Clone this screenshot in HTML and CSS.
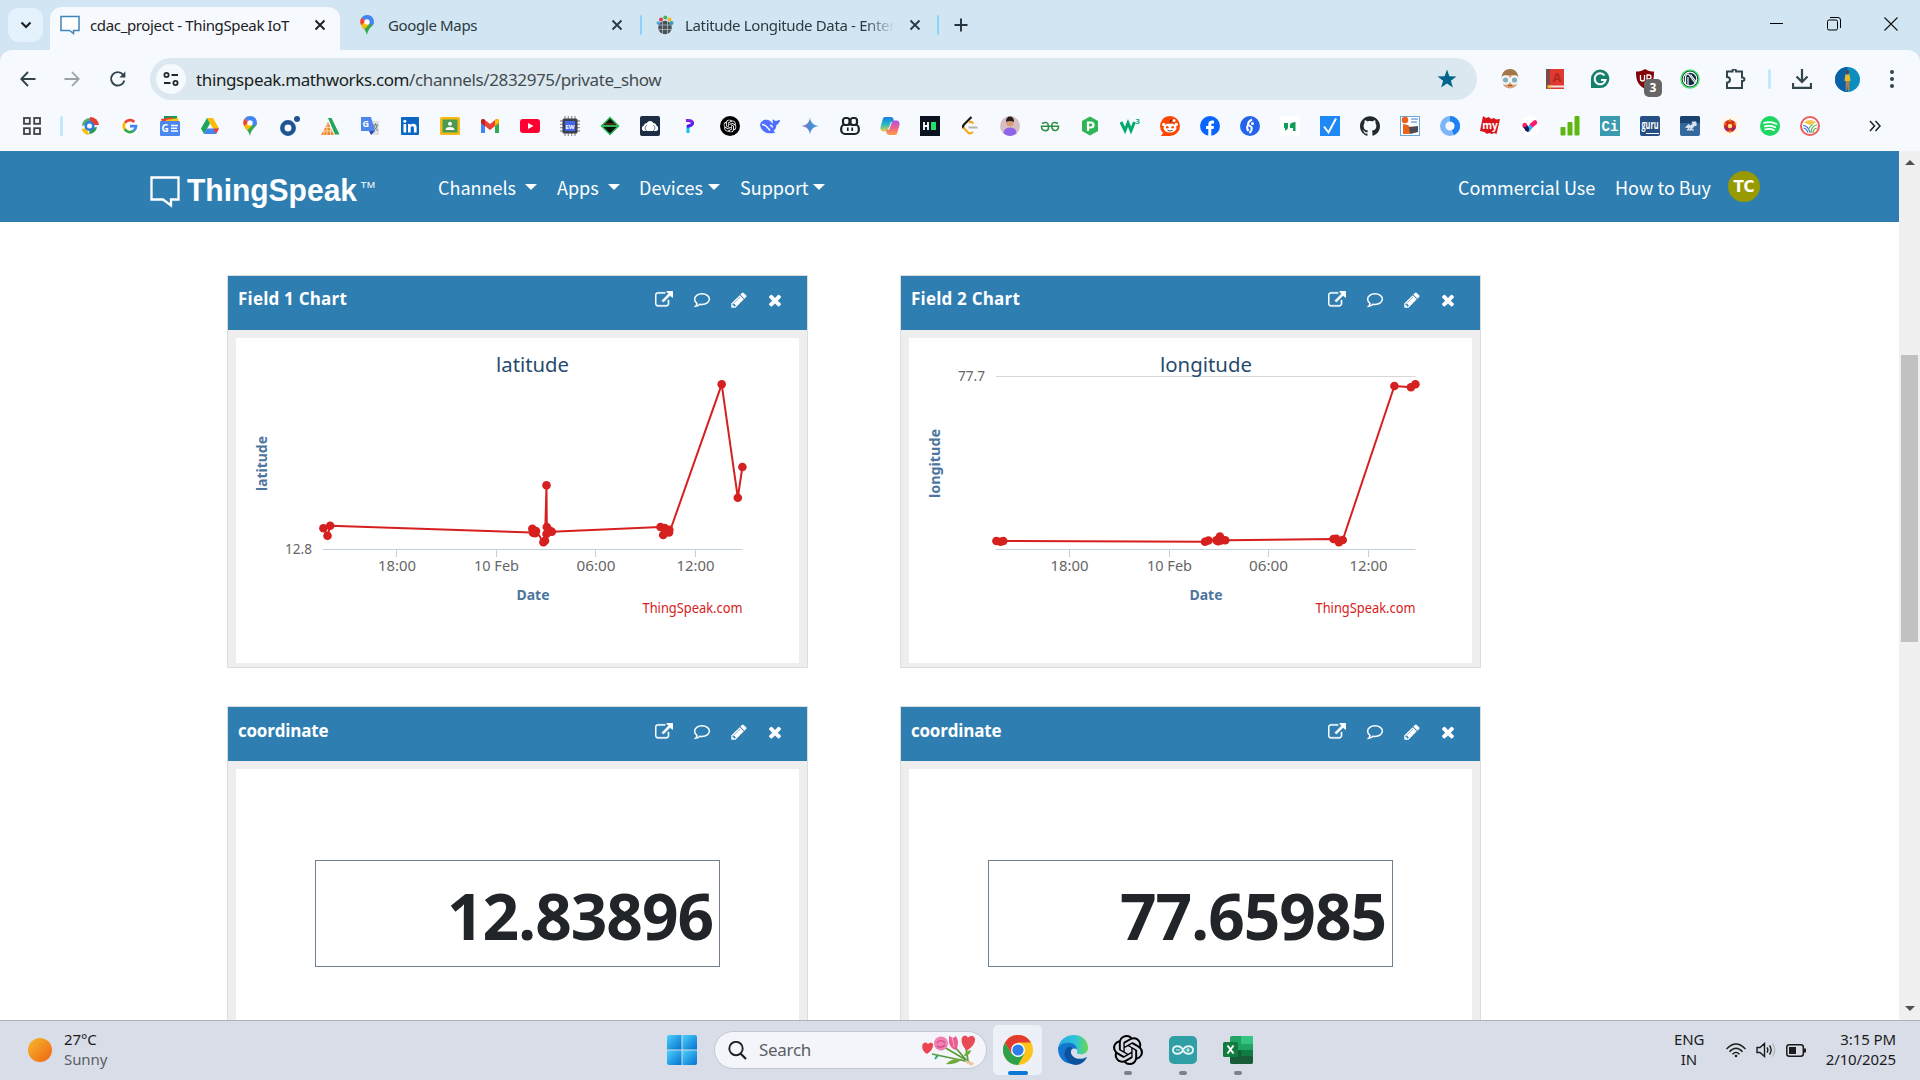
FILE: index.html
```
<!DOCTYPE html>
<html lang="en">
<head>
<meta charset="utf-8">
<title>cdac_project - ThingSpeak IoT</title>
<link rel="stylesheet" href="styles.css">
</head>
<body>
<svg class="defs" width="0" height="0">
  <defs>
    <linearGradient id="sun" x1="0" y1="0" x2="1" y2="1"><stop offset="0" stop-color="#f6b92e"/><stop offset="1" stop-color="#ef6410"/></linearGradient>
    <linearGradient id="win" x1="0" y1="0" x2="1" y2="1"><stop offset="0" stop-color="#4cd0fb"/><stop offset="1" stop-color="#0572d0"/></linearGradient>
    <linearGradient id="gem" x1="0" y1="0" x2="1" y2="0"><stop offset="0" stop-color="#9a72c4"/><stop offset=".6" stop-color="#3f8fd6"/><stop offset="1" stop-color="#4ba0e8"/></linearGradient>
    <linearGradient id="copA" x1="0" y1="0" x2="0" y2="1"><stop offset="0" stop-color="#1c7de0"/><stop offset=".5" stop-color="#22b9c8"/><stop offset="1" stop-color="#f2d040"/></linearGradient>
    <linearGradient id="copB" x1="0" y1="0" x2="0" y2="1"><stop offset="0" stop-color="#a852e8"/><stop offset=".5" stop-color="#f0608c"/><stop offset="1" stop-color="#ffa040"/></linearGradient>
    <linearGradient id="edge" x1="0" y1="0" x2="1" y2="0"><stop offset="0" stop-color="#2aa5e0"/><stop offset=".6" stop-color="#2fc5d8"/><stop offset="1" stop-color="#6ad94a"/></linearGradient>
    <linearGradient id="pp" x1="0" y1="0" x2="0" y2="1"><stop offset="0" stop-color="#8a20e0"/><stop offset="1" stop-color="#5a10f0"/></linearGradient>
    <symbol id="pin" viewBox="0 0 20 20"><path fill="#34a853" d="M10 20c.6-3 1.500-5 3.500-7.400C15.500 10.300 17 9 17 6.900L10 9.500 5.500 12.200C8 15 9.300 17 10 20z"/><path fill="#fbbc04" d="M4.200 10.200l4-5 4 4-5 5.200C5.700 12.700 4.800 11.500 4.200 10.200z"/><path fill="#ea4335" d="M4.700 2.500L8.500 6 4.200 10.200C2.700 7.500 2.900 4.700 4.700 2.500z"/><path fill="#4285f4" d="M4.700 2.500C8-1.300 14.800-.7 16.500 4.300c.6 2 .5 3.600-.3 5.300L12 9.500 8.500 5.800z"/><circle cx="10" cy="6.900" r="2.700" fill="#fff"/></symbol>
    <symbol id="knot" viewBox="0 0 24 24"><path d="M22.2819 9.8211a5.9847 5.9847 0 0 0-.5157-4.9108 6.0462 6.0462 0 0 0-6.5098-2.9A6.0651 6.0651 0 0 0 4.9807 4.1818a5.9847 5.9847 0 0 0-3.9977 2.9 6.0462 6.0462 0 0 0 .7427 7.0966 5.98 5.98 0 0 0 .511 4.9107 6.051 6.051 0 0 0 6.5146 2.9001A5.9847 5.9847 0 0 0 13.2599 24a6.0557 6.0557 0 0 0 5.7718-4.2058 5.9894 5.9894 0 0 0 3.9977-2.9001 6.0557 6.0557 0 0 0-.7475-7.0729zm-9.022 12.6081a4.4755 4.4755 0 0 1-2.8764-1.0408l.1419-.0804 4.7783-2.7582a.7948.7948 0 0 0 .3927-.6813v-6.7369l2.02 1.1686a.071.071 0 0 1 .038.052v5.5826a4.504 4.504 0 0 1-4.4945 4.4944zm-9.6607-4.1254a4.4708 4.4708 0 0 1-.5346-3.0137l.142.0852 4.783 2.7582a.7712.7712 0 0 0 .7806 0l5.8428-3.3685v2.3324a.0804.0804 0 0 1-.0332.0615L9.74 19.9502a4.4992 4.4992 0 0 1-6.1408-1.6464zM2.3408 7.8956a4.485 4.485 0 0 1 2.3655-1.9728V11.6a.7664.7664 0 0 0 .3879.6765l5.8144 3.3543-2.0201 1.1685a.0757.0757 0 0 1-.071 0l-4.8303-2.7865A4.504 4.504 0 0 1 2.3408 7.872zm16.5963 3.8558L13.1038 8.364 15.1192 7.2a.0757.0757 0 0 1 .071 0l4.8303 2.7913a4.4944 4.4944 0 0 1-.6765 8.1042v-5.6772a.79.79 0 0 0-.407-.667zm2.0107-3.0231l-.142-.0852-4.7735-2.7818a.7759.7759 0 0 0-.7854 0L9.409 9.2297V6.8974a.0662.0662 0 0 1 .0284-.0615l4.8303-2.7866a4.4992 4.4992 0 0 1 6.6802 4.66zM8.3065 12.863l-2.02-1.1638a.0804.0804 0 0 1-.038-.0567V6.0742a4.4992 4.4992 0 0 1 7.3757-3.4537l-.142.0805L8.704 5.459a.7948.7948 0 0 0-.3927.6813zm1.0976-2.3654l2.602-1.4998 2.6069 1.4998v2.9994l-2.5974 1.4997-2.6067-1.4997Z"/></symbol>
    <symbol id="close" viewBox="0 0 12 12"><path d="M1.500 1.500l9 9M10.500 1.500l-9 9" fill="none" stroke="currentColor" stroke-width="1.900"/></symbol>
    <symbol id="ext" viewBox="0 0 1792 1792"><path d="M1408 928v320q0 119-84.500 203.500t-203.500 84.500h-832q-119 0-203.500-84.500t-84.500-203.500v-832q0-119 84.500-203.500t203.500-84.500h704q14 0 23 9t9 23v64q0 14-9 23t-23 9h-704q-66 0-113 47t-47 113v832q0 66 47 113t113 47h832q66 0 113-47t47-113v-320q0-14 9-23t23-9h64q14 0 23 9t9 23zm384-864v512q0 26-19 45t-45 19-45-19l-176-176-652 652q-10 10-23 10t-23-10l-114-114q-10-10-10-23t10-23l652-652-176-176q-19-19-19-45t19-45 45-19h512q26 0 45 19t19 45z" stroke="#fff" stroke-width="40"/></symbol>
    <symbol id="talk" viewBox="0 0 18 18"><path d="M9 2.800c4.200 0 7.400 2.300 7.400 5.300s-3.200 5.300-7.400 5.300c-.7 0-1.300 0-2-.2-1.100 1-2.500 1.800-4.300 2 .8-.8 1.200-1.700 1.300-2.800C2.400 11.300 1.600 9.800 1.600 8.100c0-3 3.200-5.300 7.400-5.300z" fill="none" stroke="currentColor" stroke-width="1.500"/></symbol>
    <symbol id="pencil" viewBox="0 0 1792 1792"><path d="M491 1536l91-91-235-235-91 91v107h128v128h107zm523-928q0-22-22-22-10 0-17 7l-542 542q-7 7-7 17 0 22 22 22 10 0 17-7l542-542q7-7 7-17zm-54-192l416 416-832 832h-416v-416zm683 96q0 53-37 90l-166 166-416-416 166-165q36-38 90-38 53 0 91 38l235 234q37 39 37 91z"/></symbol>
    <symbol id="times" viewBox="0 0 1792 1792"><path d="M1490 1322q0 40-28 68l-136 136q-28 28-68 28t-68-28l-294-294-294 294q-28 28-68 28t-68-28l-136-136q-28-28-28-68t28-68l294-294-294-294q-28-28-28-68t28-68l136-136q28-28 68-28t68 28l294 294 294-294q28-28 68-28t68 28l136 136q28 28 28 68t-28 68l-294 294 294 294q28 28 28 68z"/></symbol>
  </defs>
</svg>

<div class="tabs">
  <div class="tab-search"><svg width="12" height="8" viewBox="0 0 12 8"><path d="M1.500 1.500L6 6l4.500-4.500" fill="none" stroke="#1d2124" stroke-width="2.200"/></svg></div>
  <div class="tab active">
    <svg class="fav" width="20" height="20" viewBox="0 0 20 20"><path d="M1 1.500h18v14h-5.500v3l-4-3H1z" fill="#fff" stroke="#3f86b8" stroke-width="1.500"/></svg>
    <span class="title t1">cdac_project - ThingSpeak IoT</span>
    <svg class="x" width="12" height="12"><use href="#close"/></svg>
  </div>
  <div class="tab second">
    <svg class="fav" width="20" height="20"><use href="#pin"/></svg>
    <span class="title t2">Google Maps</span>
    <svg class="x" width="12" height="12"><use href="#close"/></svg>
  </div>
  <i class="tsep"></i>
  <div class="tab third">
    <svg class="fav" width="18" height="20" viewBox="0 0 18 20"><circle cx="9" cy="12.500" r="6.800" fill="#4a5258"/><path d="M2.500 10h13M2.500 14.500h13M6.500 6v13M11.500 6v13" stroke="#aeb9c2" stroke-width=".8"/><circle cx="5" cy="4.500" r="2" fill="#e03c4e"/><circle cx="9.300" cy="2.600" r="2" fill="#43b65a"/><circle cx="13.500" cy="4.500" r="2" fill="#f6b02c"/><circle cx="15.500" cy="8" r="2" fill="#26a3b5"/><circle cx="2.300" cy="8" r="1.800" fill="#4ba3d9"/></svg>
    <span class="title t3">Latitude Longitude Data - Enter</span>
    <svg class="x" width="12" height="12"><use href="#close"/></svg>
  </div>
  <i class="tsep"></i>
  <svg class="plus" width="14" height="14" viewBox="0 0 14 14"><path d="M7 .5v13M.5 7h13" stroke="#273239" stroke-width="1.900"/></svg>
  <div class="winctl">
    <svg width="14" height="14" viewBox="0 0 14 14"><path d="M0 6.500h13" stroke="#000"/></svg>
    <svg width="14" height="14" viewBox="0 0 14 14"><rect x=".5" y="3" width="10" height="10" rx="1.500" fill="none" stroke="#000"/><path d="M3 .5h8q2.500 0 2.500 2.500v8" fill="none" stroke="#000"/></svg>
    <svg width="14" height="14" viewBox="0 0 14 14"><path d="M.5.5l13 13M13.500.5l-13 13" stroke="#111" stroke-width="1.100"/></svg>
  </div>
</div>

<div class="chrome">
  <div class="toolbar">
    <svg class="back" width="16" height="16" viewBox="0 0 16 16"><path d="M15.500 8H1.500M8 1L1.300 8 8 15" fill="none" stroke="#33444d" stroke-width="1.900"/></svg>
    <svg class="fwd" width="16" height="16" viewBox="0 0 16 16"><path d="M.5 8h14M8 1l6.700 7L8 15" fill="none" stroke="#9aa2a8" stroke-width="1.800"/></svg>
    <svg class="reload" width="18" height="18" viewBox="0 0 18 18"><path d="M15.300 10.500A6.700 6.700 0 1 1 14 4.600" fill="none" stroke="#33444d" stroke-width="1.900"/><path d="M16.400 1.500v6h-6z" fill="#33444d"/></svg>
    <div class="omni">
      <span class="site"><svg width="16" height="16" viewBox="0 0 16 16" fill="none" stroke="#22292e" stroke-width="1.800"><circle cx="3.500" cy="4" r="2.100"/><path d="M8.500 4H15M1 12h6.500"/><circle cx="12.500" cy="12" r="2.100"/></svg></span>
      <span class="url"><b>thingspeak.mathworks.com</b>/channels/2832975/private_show</span>
      <svg class="star" width="20" height="20" viewBox="0 0 20 20"><path d="M10 .5l2.400 6.700 7.100.2-5.600 4.300 2 6.900L10 14.600l-5.900 4 2-6.900L.5 7.400l7.100-.2z" fill="#03658c"/></svg>
    </div>
    <div class="exts">
      <svg width="20" height="20" viewBox="0 0 20 20"><circle cx="10" cy="11" r="8.500" fill="#d99d74"/><path d="M1.500 9C2 3 5.500 0 10 0s8 3 8.500 9l-4-3-9 0z" fill="#a0764a"/><circle cx="5.500" cy="11" r="3.700" fill="#7fb0c0" stroke="#f3f6f7" stroke-width="2.200"/><circle cx="14.500" cy="11" r="3.700" fill="#7fb0c0" stroke="#f3f6f7" stroke-width="2.200"/><path d="M8 16.500h4" stroke="#a34a3b"/></svg>
      <svg width="20" height="20" viewBox="0 0 20 20"><rect x="1" width="18" height="20" fill="#e03a30"/><rect x="1" width="4" height="20" fill="#7d4a46"/><path d="M4 16.500h15v2H4z" fill="#f0e6e2"/><path d="M2.500 16h3v4l-1.500-1-1.500 1z" fill="#f0b428"/><text x="12" y="13" class="ic" font-size="13" text-anchor="middle" fill="#b0261f">A</text></svg>
      <svg width="20" height="20" viewBox="0 0 20 20"><path d="M1 19V10a9.200 9.200 0 1 1 9 9z" fill="#14806c"/><path d="M14.500 6.500a5.500 5.500 0 1 0 1 4.500h-4.500" fill="none" stroke="#fff" stroke-width="2"/></svg>
      <div class="shield"><svg width="20" height="20" viewBox="0 0 20 20"><path d="M10 0c3 2 5.500 2.500 9 2.500 0 8-1 13-9 17.500C2 15.500 1 10.500 1 2.500 4.500 2.500 7 2 10 0z" fill="#830409"/><path d="M5.500 6v4q0 2 2 2t2-2V6M12 13V6h2q2 0 2 2t-2 2h-2" fill="none" stroke="#fff" stroke-width="1.300"/></svg><em>3</em></div>
      <svg width="20" height="20" viewBox="0 0 20 20"><circle cx="10" cy="10" r="9" fill="#0f2f3f" stroke="#4be36a" stroke-width="1.500"/><circle cx="10" cy="10" r="6.800" fill="none" stroke="#fff" stroke-width="1.200"/><path d="M5.500 15V9q0-4 3-4l7 9.500M8 8v8M10.500 5.500l5.500 7" fill="none" stroke="#fff" stroke-width="1.200"/></svg>
      <svg width="22" height="20" viewBox="0 0 22 20"><path d="M2 2.500h5.500V2a1.800 1.800 0 0 1 3.600 0v.5H17v6h.7a1.700 1.700 0 0 1 0 3.400H17V19H2v-5.300c4-.2 4-5.500 0-5.700z" fill="none" stroke="#33444d" stroke-width="2"/></svg>
      <i class="bsep"></i>
      <svg class="dl" width="20" height="20" viewBox="0 0 20 20"><path d="M10 0v12.500M4.500 7.500l5.500 5.500 5.500-5.500M1 14v4.800h18V14" fill="none" stroke="#33444d" stroke-width="2.200"/></svg>
      <svg class="me" width="25" height="25" viewBox="0 0 25 25"><circle cx="12.500" cy="12.500" r="12.500" fill="#0c8fc0"/><path d="M0 12.500A12.500 12.500 0 0 1 12.500 0v25A12.500 12.500 0 0 1 0 12.500z" fill="#0a62a6"/><circle cx="12.500" cy="5" r="1.700" fill="#6a4126"/><path d="M10.300 7.500h4.400l.8 6.500h-6z" fill="#e6ba28"/><path d="M10.700 14h3.600v9.500h-1.300l-.5-6-.5 6h-1.300z" fill="#b98245"/></svg>
      <svg class="dots" width="4" height="18" viewBox="0 0 4 18" fill="#33444d"><circle cx="2" cy="2" r="2"/><circle cx="2" cy="9" r="2"/><circle cx="2" cy="16" r="2"/></svg>
    </div>
  </div>

  <div class="bookmarks">
    <svg class="grid" width="18" height="18" viewBox="0 0 18 18" fill="none" stroke="#3c4043" stroke-width="1.800"><rect x="1" y="1" width="5.800" height="5.800"/><rect x="11.200" y="1" width="5.800" height="5.800"/><rect x="1" y="11.200" width="5.800" height="5.800"/><rect x="11.200" y="11.200" width="5.800" height="5.800"/></svg>
    <i class="bsep"></i>
    <div class="bm">
      <svg viewBox="0 0 20 20"><path d="M10 1a9 9 0 0 1 9 8h-5l-4-4z" fill="#e8402f"/><path d="M17 11a8 8 0 0 1-8 7l1-6z" fill="#2d9d4e"/><path d="M9 19a9 9 0 0 1-7.500-6l5-1z" fill="#fbbf10"/><path d="M2 10a8 8 0 0 1 8-8v6z" fill="#55a878"/><circle cx="9.500" cy="10" r="5" fill="#2f7be0"/><circle cx="9.500" cy="10" r="2.500" fill="#fff"/></svg>
      <svg viewBox="0 0 20 20"><circle cx="10" cy="10" r="10" fill="#fff"/><g fill="none" stroke-width="2.800"><path d="M5 6.800A6 6 0 0 1 14.300 6" stroke="#ea4335"/><path d="M5 6.500a6 6 0 0 0 0 7.200" stroke="#fbbc05"/><path d="M4.800 13.300a6 6 0 0 0 9 1.300" stroke="#34a853"/><path d="M10 10.200h6a6 6 0 0 1-2.200 4.500" stroke="#4285f4"/></g></svg>
      <svg viewBox="0 0 20 20"><path d="M4 0h13v6H4z" fill="#0d9d58"/><path d="M1 3l12-2 1 5H2z" fill="#ea4335"/><path d="M6 4l12-2 1 4H6z" fill="#ffc20e"/><rect y="5" width="20" height="15" rx="1" fill="#4a87f0"/><text x="1.500" y="16" class="ic" font-size="10" fill="#fff">G</text><path d="M11 9.500h7M11 12.300h6M11 15h7" stroke="#fff" stroke-width="1.500"/></svg>
      <svg viewBox="0 0 20 20"><path d="M7 2h6l6 10.500h-6z" fill="#fbbc04"/><path d="M7 2L1 12.500 4 18l6-10.500z" fill="#1ea45c"/><path d="M4 18l3-5.500h12L16 18z" fill="#4285f4"/><path d="M13 12.500h6L16 18z" fill="#ea4335"/></svg>
      <svg><use href="#pin"/></svg>
      <svg viewBox="0 0 20 20"><circle cx="8" cy="12" r="5.700" fill="none" stroke="#205493" stroke-width="4.500"/><circle cx="17" cy="3" r="3" fill="#205493"/></svg>
      <svg viewBox="0 0 20 20"><path d="M8 2h3.500l8 16.500h-4.500z" fill="#22a45a"/><path d="M8 6L1 19h13z" fill="#f08a2c"/><path d="M5 11.500h6M3 15h9M7 8v11M10.500 11v8M4 13v6" stroke="#fff" stroke-width=".6"/></svg>
      <svg viewBox="0 0 20 20"><path d="M8 5h11v14h-7z" fill="#dfe1e3"/><path d="M1 1h10l4 14H1z" fill="#4d86ec"/><path d="M9 15h6l-4 4z" fill="#2c46b8"/><text x="2.500" y="11" class="ic" font-size="9" fill="#fff">G</text><path d="M13 9h5M15.500 7.500V9M17 9c0 3-2 4.500-3.500 5.500M14 10c1 2.500 2 3.500 4 4.500" fill="none" stroke="#6b7076" stroke-width="1"/></svg>
      <svg viewBox="0 0 20 20"><rect x="1" y="1" width="18" height="18" rx="1" fill="#0a66c2"/><path d="M3.500 8h2.700v8.500H3.500zM8 8h2.600v1.200c1.500-2.200 6-1.800 6 2v5.300h-2.700V12c0-2.600-3.200-2.300-3.200 0v4.500H8z" fill="#fff"/><circle cx="4.800" cy="5.200" r="1.500" fill="#fff"/></svg>
      <svg viewBox="0 0 20 20"><rect y="1" width="20" height="18" rx="1.500" fill="#f4b912"/><rect x="2.500" y="3.500" width="15" height="13" fill="#4a9b50"/><circle cx="10" cy="7.800" r="2" fill="#fff"/><path d="M5.500 14q0-3 4.500-3t4.500 3z" fill="#fff"/></svg>
      <svg viewBox="0 0 20 20"><path d="M1 5v12h4V9z" fill="#4285f4"/><path d="M19 5v12h-4V9z" fill="#34a853"/><path d="M1 4.500Q2.500 2 5 4l5 4 5-4q2.500-2 4 .5V7l-9 7-9-7z" fill="#ea4335"/><path d="M15 4q2.500-2 4 .5V7l-4 3z" fill="#fbbc04"/><path d="M1 4.500Q2.500 2 5 4v6L1 7z" fill="#c5221f"/></svg>
      <svg viewBox="0 0 20 20"><rect y="3" width="20" height="14" rx="3" fill="#ff0033"/><path d="M8 7l5.500 3L8 13z" fill="#fff"/></svg>
      <svg viewBox="0 0 20 20"><path d="M5 0v20M8.300 0v20M11.700 0v20M15 0v20M0 5h20M0 8.300h20M0 11.700h20M0 15h20" stroke="#999" stroke-width="1.300"/><rect x="2.500" y="2.500" width="15" height="15" rx="1.500" fill="#3a3f4a"/><rect x="5" y="5" width="10" height="10" fill="#4466ee"/><text x="10" y="12.500" class="ic" font-size="6" text-anchor="middle" fill="#fff">EW</text></svg>
      <svg viewBox="0 0 20 20"><path d="M10 1.500l8.500 8.500-8.500 8.500L1.500 10z" fill="#04140a" stroke="#2bb657" stroke-width="1.500"/><path d="M1.500 10h17" stroke="#2bb657" stroke-width="2"/><path d="M5 8h10" stroke="#a83020"/></svg>
      <svg viewBox="0 0 20 20"><rect width="20" height="20" rx="2" fill="#1d2d44"/><path d="M3.500 15a3 3 0 0 1 .3-5.500 3 3 0 0 1 3-2.500 3.800 3.800 0 0 1 6.600 0 3 3 0 0 1 3 2.600 3 3 0 0 1 .2 5.400z" fill="#fff"/><path d="M7 9a3.300 3.300 0 0 0 0 6M13 9a3.300 3.300 0 0 1 0 6" fill="none" stroke="#1d2d44" stroke-width=".6"/></svg>
      <svg viewBox="0 0 20 20"><path d="M6 4.500q5.500-.5 6.500 2T8 10.500V17" fill="none" stroke="#18bdf5" stroke-width="3"/><path d="M6 4.500q5.500-.5 6.500 2T7 10.500" fill="none" stroke="url(#pp)" stroke-width="3"/></svg>
      <svg viewBox="0 0 20 20"><circle cx="10" cy="10" r="10" fill="#000"/><use href="#knot" x="3.500" y="3.500" width="13" height="13" fill="#fff"/></svg>
      <svg viewBox="0 0 20 20"><path d="M0 9c1-5 5-6 8-5 3 .5 3 3 5 3.500-.5-1.500-.5-2.500 0-4.500 1 1.500 2 1.500 3 2 1.500-.5 2.500-1 4-1-.5 3-2 4-3.500 5-.5 4-2 5-3 6l2 1.500C8 19 1 16 0 9z" fill="#4f6fff"/><path d="M2 8.500c4 0 5.500 3 8 6M10 9.500q2-.5 2.500 2" fill="none" stroke="#f7faff" stroke-width="1.500"/></svg>
      <svg viewBox="0 0 20 20"><path d="M10 1.500c.6 5 3 7.500 8.500 8.500-5.500 1-7.900 3.500-8.500 8.500-.6-5-3-7.500-8.500-8.500 5.500-1 7.900-3.500 8.500-8.500z" fill="url(#gem)"/></svg>
      <svg viewBox="0 0 20 20"><rect x="1.200" y="8.500" width="17.600" height="9.500" rx="4" fill="none" stroke="#1c2126" stroke-width="2.200"/><rect x="3" y="2" width="6.500" height="7" rx="2.500" fill="#f7faff" stroke="#1c2126" stroke-width="2.200"/><rect x="10.500" y="2" width="6.500" height="7" rx="2.500" fill="#f7faff" stroke="#1c2126" stroke-width="2.200"/><path d="M7.800 11.500v3.500M12.200 11.500v3.500" stroke="#1c2126" stroke-width="1.700"/></svg>
      <svg viewBox="0 0 20 20"><path d="M5 1h6q2 0 2.500 2l.5 3h-3L8 14q-.5 1.500-2 1.500H3Q0 15 .5 11L2.500 4Q3 1 5 1z" fill="url(#copA)"/><path d="M15 19H9q-2 0-2.500-2L6 14h3l3-8q.5-1.500 2-1.500h3q3 .5 2.500 4.500l-2 7q-.5 3-2.500 3z" fill="url(#copB)"/></svg>
      <svg viewBox="0 0 20 20"><rect width="20" height="20" fill="#0b1220"/><path d="M4 6v8M8 6v8M4 10h4" stroke="#fff" stroke-width="1.800"/><rect x="11" y="6" width="5" height="8" fill="#1fe06a"/></svg>
      <svg viewBox="0 0 20 20"><path d="M11.500 1L4 8.500q-2 2 0 4" fill="none" stroke="#15181b" stroke-width="2.200"/><path d="M3.500 11.500l4.500 5q2 2 5-.5M8.500 6.500q2.500-1.500 5 1" fill="none" stroke="#f5a623" stroke-width="2.200"/><path d="M8.500 11.500h9" stroke="#b3b3b3" stroke-width="2"/></svg>
      <svg viewBox="0 0 20 20"><circle cx="10" cy="10" r="10" fill="#d5bfc4"/><circle cx="10" cy="7" r="3.600" fill="#d79c78"/><path d="M6 6q0-5.500 4-5.500T14 6q-4-2-8 0z" fill="#2b1c1c"/><path d="M3.500 17.500q0-6 6.500-6t6.500 6a10 10 0 0 1-13 0z" fill="#8f64e8"/></svg>
      <svg viewBox="0 0 20 20"><path d="M2 7.500Q8 4.500 8.500 10t-4 4.500Q1.500 14 1.500 10.200h17Q18.500 14 15.500 14.500T11.500 10Q12 4.500 18 7.500" fill="none" stroke="#2f8d46" stroke-width="1.600"/></svg>
      <svg viewBox="0 0 20 20"><path d="M10 .5l8 4.500v10l-8 4.500L2 15V5z" fill="#2fb457"/><path d="M8 15V6.500h2.500q3 0 3 2.500t-3 2.500H8" fill="none" stroke="#fff" stroke-width="2.200"/></svg>
      <svg viewBox="0 0 20 20"><path d="M1 6l4 8.500L8 7l3 7.500L14.500 6" fill="none" stroke="#04aa6d" stroke-width="3"/><text x="15.500" y="8" class="ic" font-size="7.500" fill="#04aa6d">3</text></svg>
      <svg viewBox="0 0 20 20"><path d="M10 0a10 10 0 1 1 0 20H1l2-3A10 10 0 0 1 10 0z" fill="#ff4500"/><ellipse cx="10" cy="12" rx="6.500" ry="4.600" fill="#fff"/><circle cx="3.800" cy="8.500" r="1.700" fill="#fff"/><circle cx="16.200" cy="8.500" r="1.700" fill="#fff"/><circle cx="7.300" cy="11.300" r="1.300" fill="#ff4500"/><circle cx="12.700" cy="11.300" r="1.300" fill="#ff4500"/><path d="M7.500 14.300q2.500 1.500 5 0M10 7.500l.8-3.500 3 .7" stroke="#222" fill="none" stroke-width=".8"/><circle cx="14" cy="4.500" r="1.500" fill="#fff"/></svg>
      <svg viewBox="0 0 20 20"><circle cx="10" cy="10" r="10" fill="#0866ff"/><path d="M8.300 20v-7H6v-3h2.300V8.500C8.300 5.500 10 4.200 14 4.700v2.700c-2-.1-2.700.1-2.700 1.500V10H14l-.5 3h-2.200v7z" fill="#fff"/></svg>
      <svg viewBox="0 0 20 20"><circle cx="10" cy="10" r="10" fill="#2563eb"/><path d="M12 3.500q-4 2-4 5l3.500 2.500q1 3-2 6M8 9q-2 3 .5 6" fill="none" stroke="#fff" stroke-width="2"/><circle cx="12.500" cy="7.500" r="1.500" fill="#fff"/></svg>
      <svg viewBox="0 0 20 20"><rect width="20" height="20" fill="#fff"/><path d="M4 7h4v4q0 3-3 3.500V12H4zM10 12q-1.500-6 5.500-6v9h-2.500v-3z" fill="#0f9d58"/></svg>
      <svg viewBox="0 0 20 20"><rect width="20" height="20" fill="#1e88f5"/><path d="M4 10.500l4.500 6L16 2.500" fill="none" stroke="#fff" stroke-width="2"/></svg>
      <svg viewBox="0 0 24 24"><path fill="#24292f" d="M12 .297c-6.630 0-12 5.373-12 12 0 5.303 3.438 9.800 8.205 11.385.6.113.82-.258.82-.577 0-.285-.01-1.040-.015-2.040-3.338.724-4.042-1.610-4.042-1.610C4.422 18.070 3.633 17.700 3.633 17.700c-1.087-.744.084-.729.084-.729 1.205.084 1.838 1.236 1.838 1.236 1.070 1.835 2.809 1.305 3.495.998.108-.776.417-1.305.76-1.605-2.665-.3-5.466-1.332-5.466-5.930 0-1.310.465-2.380 1.235-3.220-.135-.303-.54-1.523.105-3.176 0 0 1.005-.322 3.300 1.230.96-.267 1.980-.399 3-.405 1.020.006 2.040.138 3 .405 2.280-1.552 3.285-1.230 3.285-1.230.645 1.653.24 2.873.12 3.176.765.84 1.230 1.910 1.230 3.220 0 4.610-2.805 5.625-5.475 5.920.42.36.81 1.096.81 2.220 0 1.606-.015 2.896-.015 3.286 0 .315.21.69.825.57C20.565 22.092 24 17.592 24 12.297c0-6.627-5.373-12-12-12"/></svg>
      <svg viewBox="0 0 20 20"><rect x=".5" y=".5" width="19" height="19" fill="#fff" stroke="#6aa6d6"/><circle cx="5" cy="4" r="3.300" fill="#e8641c"/><path d="M3 8l5 1 5 6-4 3H3z" fill="#e8641c"/><path d="M9 11l9-1v6l-8 2z" fill="#4d4a52"/><path d="M11 3h7M11 6h6" stroke="#3a7cc0"/></svg>
      <svg viewBox="0 0 20 20"><circle cx="10" cy="10" r="7.300" fill="none" stroke="#7db5f8" stroke-width="5.400"/><path d="M10 2.700A7.300 7.300 0 0 1 13 16.700" fill="none" stroke="#1f80f5" stroke-width="5.400"/></svg>
      <svg viewBox="0 0 20 20"><path d="M3 0l3 2L9 1l2 2 3-1 2 1.500 4-.5-3.500 15-2.500-1-2 1-3-1-2 1-2.500-2L0 15z" fill="#d8141c"/><text x="10" y="13" class="ic" font-size="10" text-anchor="middle" fill="#fff">my</text></svg>
      <svg viewBox="0 0 20 20"><circle cx="10" cy="10" r="10" fill="#fff"/><g stroke-width="4.500" stroke-linecap="round"><path d="M5 10l3 3.500" stroke="#1b1b4d"/><path d="M11.500 9.500l3.500-3" stroke="#ff1a6c"/><path d="M10 11.500L8.500 13" stroke="#29b6f6"/><path d="M7 13v.1" stroke="#1b1b4d"/><path d="M4.700 9v.1" stroke="#ff1a6c"/></g></svg>
      <svg viewBox="0 0 20 20"><rect x=".5" y="11" width="5" height="8.500" rx="1" fill="#5fb611"/><rect x="7.500" y="6" width="5" height="13.500" rx="1" fill="#5fb611"/><rect x="14.500" y="0" width="5" height="19.500" rx="1" fill="#5fb611"/></svg>
      <svg viewBox="0 0 20 20"><rect width="20" height="20" fill="#3a9bb0"/><text x="10" y="15" class="mono" font-size="14" text-anchor="middle" fill="#fff">Ci</text></svg>
      <svg viewBox="0 0 20 20"><rect width="20" height="20" rx="2" fill="#264f85"/><text x="10" y="12.500" class="ic" font-size="12" textLength="17" lengthAdjust="spacingAndGlyphs" text-anchor="middle" fill="#fff">guru</text><path d="M6 17.500h13" stroke="#fff"/></svg>
      <svg viewBox="0 0 20 20"><rect width="20" height="20" rx="2" fill="#35699e"/><path d="M0 2q0-2 2-2h16q2 0 2 2v5H0z" fill="#1b4370"/><path d="M5.500 11.500l3-3 2 1.500L13 7.500 12 6h4v4l-1-1-3.500 4-2-1.500L7 14h7" fill="#d9e4ef" stroke="#d9e4ef"/></svg>
      <svg viewBox="0 0 20 20"><rect width="20" height="20" fill="#fff8f0"/><circle cx="10" cy="10" r="6.200" fill="#d8281f"/><path d="M10 2.500l2 3h-4zM10 17.500l2-3h-4zM3.500 6.500l3 .5-2 3zM16.500 6.500l-3 .5 2 3z" fill="#e88a1c"/><path d="M4 12l4-1 1 4zM16 12l-4-1-1 4z" fill="#7d2b8b"/><circle cx="10" cy="10" r="2.200" fill="#ffe58a"/></svg>
      <svg viewBox="0 0 20 20"><circle cx="10" cy="10" r="10" fill="#1ed760"/><path d="M4 7q6.500-2 12.500 1M4.800 10.300q5.500-1.500 10.500 1M5.300 13.400q4.500-1.200 8.700.8" fill="none" stroke="#fff" stroke-width="1.800" stroke-linecap="round"/></svg>
      <svg viewBox="0 0 20 20"><circle cx="10" cy="10" r="9" fill="#fff" stroke="#ef5b5b" stroke-width="2"/><path d="M4 6.500q6-5 12 0l-6 2.500z" fill="#f6c344"/><path d="M3 9.500q5 0 7 7M3.500 12q3 .5 4.500 4.500" fill="none" stroke="#3e6fe0" stroke-width="1.200"/><path d="M17 9q-6 1-6 8M17 12q-4 1-4 5M13 8.500q-3 1-4 4" fill="none" stroke="#56b04b" stroke-width="1.200"/></svg>
    </div>
    <svg class="more" width="12" height="12" viewBox="0 0 12 12"><path d="M1 1l4.500 5L1 11M6.500 1L11 6l-4.500 5" fill="none" stroke="#22292e" stroke-width="1.600"/></svg>
  </div>
</div>

<div class="view">
  <div class="page">
    <header class="nav">
      <svg class="logo" width="228" height="40" viewBox="148 170 228 40"><path d="M151.500 177.500h27v22h-7.500v6l-8-6h-11.500z" fill="none" stroke="#fff" stroke-width="2.300"/><text x="187" y="200.500" class="brand" font-size="31" textLength="170" lengthAdjust="spacingAndGlyphs">ThingSpeak</text><text x="360.500" y="188" class="tm" font-size="9.500" textLength="14.500" lengthAdjust="spacingAndGlyphs">TM</text></svg>
      <nav class="left">
        <a class="n1">Channels</a><i class="caret"></i>
        <a class="n2">Apps</a><i class="caret"></i>
        <a class="n3">Devices</a><i class="caret"></i>
        <a class="n4">Support</a><i class="caret"></i>
      </nav>
      <nav class="right"><a class="n5">Commercial Use</a><a class="n6">How to Buy</a><span class="avatar">TC</span></nav>
    </header>

    <main class="cards">
      <section class="card">
        <h2><span>Field 1 Chart</span><svg class="i1"><use href="#ext"/></svg><svg class="i2"><use href="#talk"/></svg><svg class="i3"><use href="#pencil"/></svg><svg class="i4"><use href="#times"/></svg></h2>
        <div class="body">
          <svg class="chart" width="563" height="325" viewBox="236 338 563 325">
            <path class="axis" d="M323 549.500H742.500M396.500 550v7M496.500 550v7M595.500 550v7M695.500 550v7"/>
            <text class="ct" x="532.500" y="371.500" textLength="73" lengthAdjust="spacingAndGlyphs">latitude</text>
            <text class="at" transform="translate(266.500 463.500) rotate(-90)" textLength="55" lengthAdjust="spacingAndGlyphs">latitude</text>
            <text class="lb" x="298.500" y="554" textLength="27" lengthAdjust="spacingAndGlyphs">12.8</text>
            <text class="lb" x="397" y="571" textLength="38" lengthAdjust="spacingAndGlyphs">18:00</text>
            <text class="lb" x="496.500" y="571" textLength="45" lengthAdjust="spacingAndGlyphs">10 Feb</text>
            <text class="lb" x="596" y="571" textLength="39" lengthAdjust="spacingAndGlyphs">06:00</text>
            <text class="lb" x="695.500" y="571" textLength="38" lengthAdjust="spacingAndGlyphs">12:00</text>
            <text class="at" x="533" y="600" textLength="33" lengthAdjust="spacingAndGlyphs">Date</text>
            <text class="cr" x="692.500" y="613" textLength="100" lengthAdjust="spacingAndGlyphs">ThingSpeak.com</text>
            <path class="line" d="M323.400 528.300L327.500 535.700 330.200 525.700 532.300 532.500 536.500 531.300 543.400 542.300 545 540.700 546.500 485.300 546.800 527 551.800 531.700 660.500 527 663.200 535 664.700 527.300 669.300 533 721.700 384.300 737.800 497.700 742.400 467"/>
            <g class="pt"><circle cx="323.400" cy="528.300" r="4.300"/><circle cx="327.500" cy="535.700" r="4.300"/><circle cx="330.200" cy="525.700" r="4.300"/><circle cx="532.300" cy="528.700" r="4.300"/><circle cx="533" cy="532.700" r="4.300"/><circle cx="535" cy="533.300" r="4.300"/><circle cx="536" cy="531" r="4.300"/><circle cx="543.400" cy="542.300" r="4.300"/><circle cx="545" cy="540.700" r="4.300"/><circle cx="546.500" cy="485.300" r="4.300"/><circle cx="546.800" cy="527" r="4.300"/><circle cx="546.500" cy="534" r="4.300"/><circle cx="549.500" cy="530.500" r="4.300"/><circle cx="551.800" cy="531.700" r="4.300"/><circle cx="660.500" cy="527" r="4.300"/><circle cx="663.200" cy="535" r="4.300"/><circle cx="664.700" cy="528" r="4.300"/><circle cx="669.300" cy="529.700" r="4.300"/><circle cx="669" cy="532.500" r="4.300"/><circle cx="721.700" cy="384.300" r="4.300"/><circle cx="737.800" cy="497.700" r="4.300"/><circle cx="742.400" cy="467" r="4.300"/></g>
          </svg>
        </div>
      </section>
      <section class="card">
        <h2><span>Field 2 Chart</span><svg class="i1"><use href="#ext"/></svg><svg class="i2"><use href="#talk"/></svg><svg class="i3"><use href="#pencil"/></svg><svg class="i4"><use href="#times"/></svg></h2>
        <div class="body">
          <svg class="chart" width="563" height="325" viewBox="236 338 563 325">
            <path d="M323 376.500H742.500" stroke="#d8d8d8"/>
            <path class="axis" d="M323 549.500H742.500M396.500 550v7M496.500 550v7M595.500 550v7M695.500 550v7"/>
            <text class="ct" x="533" y="371.500" textLength="92" lengthAdjust="spacingAndGlyphs">longitude</text>
            <text class="at" transform="translate(266.500 463.500) rotate(-90)" textLength="69" lengthAdjust="spacingAndGlyphs">longitude</text>
            <text class="lb" x="298.500" y="381" textLength="27" lengthAdjust="spacingAndGlyphs">77.7</text>
            <text class="lb" x="396.500" y="571" textLength="38" lengthAdjust="spacingAndGlyphs">18:00</text>
            <text class="lb" x="496.500" y="571" textLength="45" lengthAdjust="spacingAndGlyphs">10 Feb</text>
            <text class="lb" x="595.500" y="571" textLength="39" lengthAdjust="spacingAndGlyphs">06:00</text>
            <text class="lb" x="695.500" y="571" textLength="38" lengthAdjust="spacingAndGlyphs">12:00</text>
            <text class="at" x="533" y="600" textLength="33" lengthAdjust="spacingAndGlyphs">Date</text>
            <text class="cr" x="692.500" y="613" textLength="100" lengthAdjust="spacingAndGlyphs">ThingSpeak.com</text>
            <path class="line" d="M323.400 541L327.600 541.700 330.300 541 532 541.700 535.400 540.300 543.400 540.300 546.900 536.300 552.200 540.300 660.500 539 665.900 542.300 669.700 540 721.400 386 737.900 387.300 742.400 384.300"/>
            <g class="pt"><circle cx="323.400" cy="541" r="4.300"/><circle cx="327.600" cy="541.700" r="4.300"/><circle cx="330.300" cy="541" r="4.300"/><circle cx="532" cy="541.700" r="4.300"/><circle cx="535.400" cy="540.500" r="4.300"/><circle cx="543.400" cy="540.300" r="4.300"/><circle cx="545" cy="541.300" r="4.300"/><circle cx="546.900" cy="536.500" r="4.300"/><circle cx="548" cy="540.500" r="4.300"/><circle cx="552.200" cy="540.300" r="4.300"/><circle cx="660.500" cy="539" r="4.300"/><circle cx="663.300" cy="538.700" r="4.300"/><circle cx="665.900" cy="542.300" r="4.300"/><circle cx="669.700" cy="540" r="4.300"/><circle cx="721.400" cy="386" r="4.300"/><circle cx="737.900" cy="387.300" r="4.300"/><circle cx="742.400" cy="384.300" r="4.300"/></g>
          </svg>
        </div>
      </section>
      <section class="card">
        <h2><span class="co">coordinate</span><svg class="i1"><use href="#ext"/></svg><svg class="i2"><use href="#talk"/></svg><svg class="i3"><use href="#pencil"/></svg><svg class="i4"><use href="#times"/></svg></h2>
        <div class="body num"><div class="value">12.83896</div></div>
      </section>
      <section class="card">
        <h2><span class="co">coordinate</span><svg class="i1"><use href="#ext"/></svg><svg class="i2"><use href="#talk"/></svg><svg class="i3"><use href="#pencil"/></svg><svg class="i4"><use href="#times"/></svg></h2>
        <div class="body num"><div class="value">77.65985</div></div>
      </section>
    </main>
  </div>
  <div class="scroll">
    <svg width="10" height="5" viewBox="0 0 10 5"><path d="M0 5l5-5 5 5z" fill="#505050"/></svg>
    <div class="thumb"></div>
    <svg width="10" height="5" viewBox="0 0 10 5"><path d="M0 0l5 5 5-5z" fill="#505050"/></svg>
  </div>
</div>

<footer class="taskbar">
  <div class="weather">
    <svg width="24" height="24"><circle cx="12" cy="12" r="12" fill="url(#sun)"/></svg>
    <div class="up"><p class="deg">27°C</p><p class="dim">Sunny</p></div>
  </div>
  <svg class="start" width="30" height="30" viewBox="0 0 30 30"><g fill="url(#win)"><path d="M2 0h12.500v14.500H0V2q0-2 2-2z"/><path d="M15.500 0H28q2 0 2 2v12.500H15.500z"/><path d="M0 15.500h14.500V30H2q-2 0-2-2z"/><path d="M15.500 15.500H30V28q0 2-2 2H15.500z"/></g></svg>
  <div class="search">
    <svg class="mag" width="19" height="19" viewBox="0 0 19 19"><circle cx="8" cy="7.500" r="6.700" fill="none" stroke="#222" stroke-width="1.900"/><path d="M12.500 12.500l5.500 5.500" stroke="#222" stroke-width="2.300"/></svg>
    <span>Search</span>
    <svg class="flowers" width="54" height="31" viewBox="0 0 54 31"><path d="M10 19l38 8M22 12l22 13M33 12l12 14M44 13l2 13" stroke="#5a9b3c" stroke-width="1.700" fill="none"/><path d="M16 20l-3 4" stroke="#2fa878" stroke-width="2"/><path d="M24 29q6-6 16-5-5 6-16 5zM42 21q1-5 7-6-1 6-7 6z" fill="#6faa3c"/><path d="M43 25l9 3-2 3-6-3z" fill="#f0c79c"/><path d="M5 19Q-1 15 .5 9.500 3 6 6 9q3-3 5 0 1 5-6 10z" fill="#ec4650"/><circle cx="19" cy="8.500" r="7" fill="#f07fb2"/><path d="M15 8q4-5 8 0M15 11q4 3 8-1" fill="none" stroke="#c9447c" stroke-width="1.100"/><path d="M27 1l4 2 3-2q4 7 0 14-5-1-7-7z" fill="#ee5d92"/><path d="M30 3q2 5 2 9" stroke="#ffb0cc" fill="none"/><path d="M45 15.500Q38 9 40 2.500q3-4 6 0 5-4 7 1 1 6-8 12z" fill="#e84a56"/></svg>
  </div>
  <div class="apps">
    <div class="app on"><svg width="30" height="30" viewBox="0 0 30 30"><circle cx="15" cy="15" r="15" fill="#fcc419"/><path d="M2 7.500A15 15 0 0 1 28 7.500H15L8.500 18.700z" fill="#e33b2e"/><path d="M2 7.500a15 15 0 0 0 13 22.500l6.500-11.200H8.500z" fill="#2da14c"/><circle cx="15" cy="15" r="7" fill="#fff"/><circle cx="15" cy="15" r="5.600" fill="#2f7de9"/></svg><i></i></div>
    <div class="app"><svg width="30" height="30" viewBox="0 0 30 30"><path d="M0 14C2-5 30-4 30 13c0 6-7 7.500-11 5.500 2-8-11-11-19-4.500z" fill="url(#edge)"/><path d="M0 13c4-7 18-7 19 1-5-2-7.500 2-6 6 2 5 9 7 16 2C22 33 0 32 0 13z" fill="#1377cf"/><path d="M10 12c-8 6-1 18 8 18 5-.5 9-3.500 11-8-7 4-15 1-16-4-.3-2 .2-4 1.500-5.200C13 11.500 11.500 11.500 10 12z" fill="#0c529f"/></svg></div>
    <div class="app run"><svg width="30" height="30"><use href="#knot"/></svg><i></i></div>
    <div class="app run"><svg width="28" height="28" viewBox="0 0 28 28"><rect width="28" height="28" rx="5" fill="#2d9fa5"/><path d="M14 14c-3-6-10-4-10 0s7 6 10 0c3-6 10-4 10 0s-7 6-10 0z" fill="none" stroke="#e5f3f3" stroke-width="1.900"/><path d="M7 14h4M17 14h4M19 12v4" stroke="#e5f3f3" stroke-width="1.100"/></svg><i></i></div>
    <div class="app run"><svg width="30" height="28" viewBox="0 0 30 28"><rect x="7" width="23" height="28" rx="2" fill="#21a366"/><path d="M18 0h10q2 0 2 2v6H18z" fill="#33c481"/><path d="M7 14h11v7H7z" fill="#185c37"/><path d="M18 14h12v7H18z" fill="#107c41"/><path d="M7 20h23v6q0 2-2 2H9q-2 0-2-2z" fill="#185c37"/><rect y="6" width="15" height="15" rx="1.500" fill="#107c41"/><path d="M4.500 9.500l6 8M10.500 9.500l-6 8" stroke="#fff" stroke-width="2"/></svg><i></i></div>
  </div>
  <div class="tray">
    <div class="lang up"><p>ENG</p><p>IN</p></div>
    <svg class="wifi" width="20" height="15" viewBox="0 0 20 15" fill="none" stroke="#1b1b1b" stroke-width="1.400"><path d="M.5 6q9.500-10 19 0M3.500 8.800q6.500-7 13 0M6.500 11.300q3.500-3.800 7 0"/><circle cx="10" cy="13" r="1.300" fill="#1b1b1b" stroke="none"/></svg>
    <svg class="vol" width="20" height="16" viewBox="0 0 20 16" fill="none" stroke="#1b1b1b" stroke-width="1.400"><path d="M1 5.500h3l4.500-4v13L4 10.500H1zM11 5.500q1.700 2.500 0 5M13.500 3.500q3.300 4.500 0 9"/><path d="M16.500 1.500q4.500 6.500 0 13" stroke="#b4b8c2"/></svg>
    <svg class="bat" width="20" height="13" viewBox="0 0 20 13"><rect x=".8" y=".8" width="16.500" height="11.400" rx="2.500" fill="none" stroke="#1b1b1b" stroke-width="1.500"/><rect x="3" y="3" width="7" height="7" fill="#1b1b1b"/><path d="M18 4.500h2v4h-2z" fill="#1b1b1b"/></svg>
    <div class="clock up"><p class="c1">3:15 PM</p><p class="c2">2/10/2025</p></div>
  </div>
</footer>
</body>
</html>
```
FILE: styles.css
```
* { box-sizing: border-box; }
body { margin: 0; width: 1920px; height: 1080px; overflow: hidden; display: flex; flex-direction: column; background: #fff; font-family: "Noto Sans", "Open Sans", sans-serif; }
p, h2 { margin: 0; }
svg { display: block; flex: none; }
.defs { position: absolute; }
.ic { font-family: "Open Sans", sans-serif; font-weight: 700; }
.mono { font-family: "Liberation Mono", monospace; font-weight: 700; }

/* tab strip */
.tabs { height: 50px; flex: none; background: #d2e5f2; display: flex; align-items: center; color: #2c3a42; }
.tab-search { width: 35px; height: 34px; margin-left: 8px; border-radius: 11px; background: #e4f2fd; display: flex; align-items: center; justify-content: center; }
.tab { display: flex; align-items: center; height: 43px; }
.tab .title { white-space: nowrap; overflow: hidden; font-size: 15px; line-height: 22px; flex: none; }
.active { margin: 7px 0 0 7px; width: 290px; padding: 0 0 7px 10px; background: #f6f9fe; border-radius: 12px 12px 0 0; color: #1d2124; }
.t1 { width: 205px; margin-left: 10px; letter-spacing: -.35px; }
.active .x { margin-left: 19px; }
.second { width: 300px; padding-left: 17px; }
.t2 { width: 222px; margin-left: 11px; letter-spacing: -.35px; }
.second .x { margin-left: 1px; }
.tsep { width: 2px; height: 20px; border-radius: 1px; background: #8bd2fb; }
.third { width: 295px; padding-left: 14px; }
.t3 { width: 214px; margin-left: 11px; letter-spacing: -.35px; -webkit-mask-image: linear-gradient(90deg, #000 84%, transparent 98%); mask-image: linear-gradient(90deg, #000 84%, transparent 98%); }
.third .x { margin-left: 10px; }
.plus { margin-left: 15px; }
.winctl { margin: -2px 22px 0 auto; display: flex; gap: 43px; }

/* toolbar */
.chrome { height: 101px; flex: none; background: linear-gradient(#d2e5f2 0 12px, transparent 12px), #f6f9fe; }
.toolbar { height: 58px; background: #f6f9fe; border-radius: 12px 12px 0 0; display: flex; align-items: center; color: #33444d; }
.back { margin-left: 20px; }
.fwd { margin-left: 28px; }
.reload { margin-left: 29px; }
.omni { width: 1327px; height: 42px; margin-left: 23px; background: #dce8ef; border-radius: 21px; display: flex; align-items: center; padding-left: 6px; }
.site { width: 30px; height: 30px; border-radius: 50%; background: #f6f9fe; display: flex; align-items: center; justify-content: center; }
.url { width: 480px; margin-left: 10px; padding-top: 1px; font-size: 17px; line-height: 24px; white-space: nowrap; letter-spacing: -.38px; color: #444c51; }
.url b { font-weight: 400; color: #1a1e21; }
.star { margin-left: auto; margin-right: 20px; }
.exts { display: flex; align-items: center; margin-left: 23px; gap: 25px; }
.shield { position: relative; }
.shield em { position: absolute; left: 9px; top: 10px; width: 18px; height: 18px; border-radius: 5px; background: #666; color: #fff; font: 700 12px/18px "Open Sans", sans-serif; text-align: center; }
.bsep { width: 3px; height: 20px; border-radius: 2px; background: #c3e7fd; }
.exts .bsep { margin-left: -4px; margin-right: -4px; }
.me { margin-left: -2px; }
.dots { margin-left: 5px; }
.bookmarks { height: 43px; display: flex; align-items: center; padding-bottom: 7px; }
.grid { margin-left: 23px; }
.bookmarks .bsep { margin-left: 19px; }
.bm { display: flex; gap: 20px; margin-left: 17px; }
.bm svg { width: 20px; height: 20px; }
.more { margin-left: 49px; }

/* page */
.view { height: 869px; flex: none; display: flex; overflow: hidden; }
.page { width: 1899px; overflow: hidden; }
.nav { height: 71px; background: #2e7eb2; display: flex; color: #fff; font: 18px/26px "Noto Sans CJK SC", "Noto Sans", sans-serif; padding-top: 19px; }
.logo { margin-left: 148px; }
.brand { font-family: "Liberation Sans", sans-serif; font-weight: 700; fill: #fff; }
.tm { font-family: "Liberation Sans", sans-serif; fill: #fff; }
.nav nav { display: flex; height: 33px; align-items: center; white-space: nowrap; }
.left { margin-left: 62px; }
.caret { border: 6px solid transparent; border-top-color: #fff; border-bottom: 0; }
.n1 { width: 87px; }
.n2 { width: 51px; margin-left: 20px; }
.n3 { width: 69px; margin-left: 19px; }
.n4 { width: 73px; margin-left: 20px; }
.right { margin-left: auto; margin-right: 139px; }
.n5 { width: 157px; }
.n6 { width: 113px; }
.avatar { width: 32px; height: 31px; border-radius: 50%; background: #979a00; font: 700 15px/32px "DejaVu Sans", sans-serif; text-align: center; }
.cards { display: grid; grid-template-columns: 581px 581px; column-gap: 92px; row-gap: 38px; padding: 53px 0 0 227px; }
.card { height: 393px; border: 1px solid #dcdcdc; background: #eee; }
.card h2 { height: 54px; background: #2e7eb2; color: #fff; fill: #fff; display: flex; padding: 11px 0 0 10px; font: 700 17px/24px "Open Sans", sans-serif; letter-spacing: .2px; }
.card h2 span { width: 417px; }
.card h2 .co { letter-spacing: -.2px; padding-top: 1px; }
.card h2 svg { width: 18px; height: 18px; margin-top: 4px; }
.card h2 .co ~ svg { margin-top: 5px; }
.card .i2 { margin-left: 20px; }
.card .i3 { margin-left: 19px; }
.card .i4 { margin-left: 18px; }
.body { margin: 8px 8px 4px 8px; height: 325px; background: #fff; }
.axis { fill: none; stroke: #c0d0e0; }
.ct, .at, .lb, .cr { font-family: "Noto Sans", sans-serif; text-anchor: middle; }
.ct { font-size: 19.5px; fill: #274b6d; }
.at { font-size: 15px; font-weight: 700; fill: #4d759e; }
.lb { font-size: 14px; fill: #666; }
.cr { font-size: 13.5px; fill: #d62020; }
.line { fill: none; stroke: #d62020; stroke-width: 2; stroke-linejoin: round; }
.pt { fill: #d62020; }
.num { padding-top: 91px; }
.value { width: 405px; height: 107px; margin-left: 79px; border: 1px solid #708090; padding-right: 6px; text-align: right; font: 700 64px/110px "Open Sans", sans-serif; letter-spacing: -1.050px; color: #212529; }
.scroll { width: 21px; background: #f0f0f0; display: flex; flex-direction: column; align-items: center; padding: 9px 0 9px; }
.thumb { width: 17px; height: 287px; background: #c1c1c1; margin: 190px 0 auto; }

/* taskbar */
.taskbar { height: 60px; background: #d9dde8; border-top: 1px solid #aeb0ba; display: flex; align-items: center; font-size: 15px; line-height: 20px; color: #1b1b1b; letter-spacing: -.1px; padding-bottom: 1px; }
.taskbar p { white-space: nowrap; }
.up { padding-bottom: 3px; }
.weather { display: flex; align-items: center; width: 639px; padding-left: 28px; gap: 12px; }
.dim { color: #5c5f66; }
.start { margin-left: 28px; }
.search { width: 273px; height: 38px; margin-left: 17px; border-radius: 19px; background: #f3f5fa; border: 1px solid #c3c7d3; display: flex; align-items: center; font-size: 17px; color: #5b5e63; }
.mag { margin-left: 13px; }
.search span { width: 163px; margin-left: 12px; letter-spacing: -.3px; }
.apps { display: flex; margin-left: 6px; gap: 6px; }
.app { width: 49px; height: 50px; display: flex; flex-direction: column; align-items: center; justify-content: center; position: relative; }
.on { background: #edf0f6; border-radius: 5px; }
.app i { position: absolute; bottom: 0; width: 8px; height: 4px; border-radius: 2px; background: #7f8187; }
.on i { width: 20px; background: #0a78d4; }
.tray { margin-left: auto; display: flex; align-items: center; }
.lang { width: 30px; text-align: center; }
.wifi { margin-left: 22px; }
.vol { margin-left: 10px; }
.bat { margin-left: 10px; }
.clock { width: 90px; text-align: right; margin-right: 24px; }
```
